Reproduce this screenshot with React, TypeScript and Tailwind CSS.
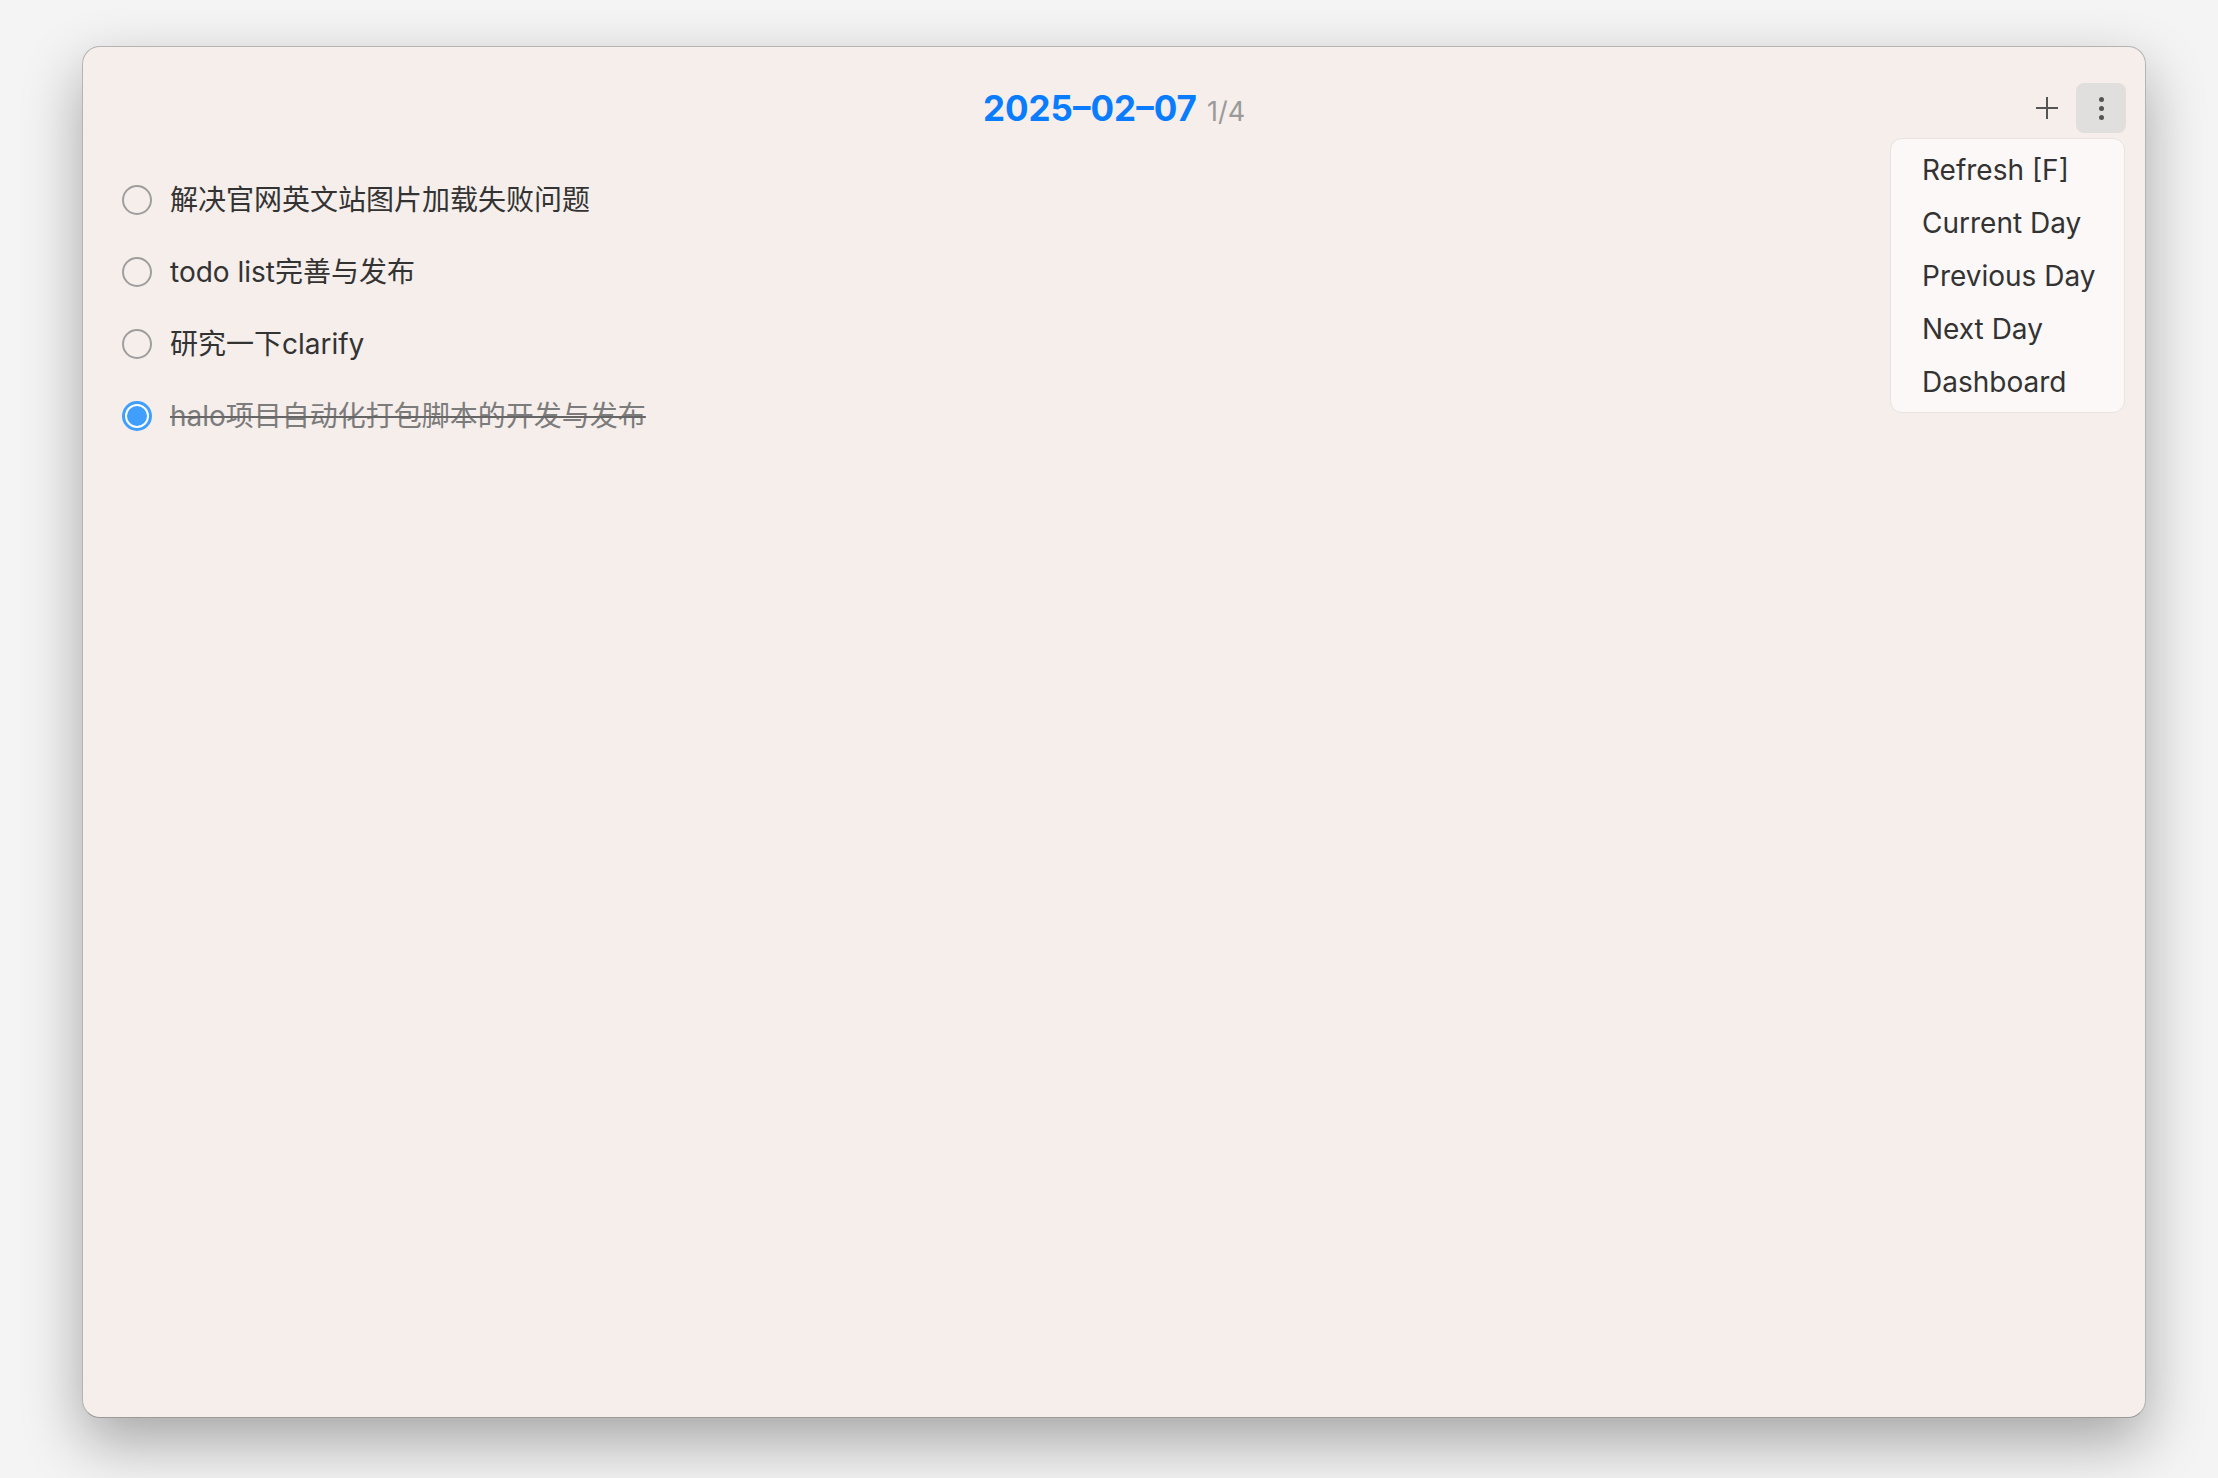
import React, { useState } from 'react';

interface Task {
  id: number;
  title: string;
  done: boolean;
}

const initialTasks: Task[] = [
  { id: 1, title: '解决官网英文站图片加载失败问题', done: false },
  { id: 2, title: 'todo list完善与发布', done: false },
  { id: 3, title: '研究一下clarify', done: false },
  { id: 4, title: 'halo项目自动化打包脚本的开发与发布', done: true },
];

const menuItems = ['Refresh [F]', 'Current Day', 'Previous Day', 'Next Day', 'Dashboard'];

const TaskCheck: React.FC<{ done: boolean }> = ({ done }) =>
  done ? (
    <span className="flex h-[30px] w-[30px] shrink-0 items-center justify-center rounded-full bg-[#409eff] p-[3px]">
      <span className="h-full w-full rounded-full border-2 border-white bg-[#409eff]" />
    </span>
  ) : (
    <span className="h-[30px] w-[30px] shrink-0 rounded-full border-2 border-[#9e9e9e]" />
  );

const App: React.FC = () => {
  const [tasks, setTasks] = useState<Task[]>(initialTasks);
  const [menuOpen, setMenuOpen] = useState(true);

  const toggle = (id: number) => {
    setTasks((prev) => prev.map((t) => (t.id === id ? { ...t, done: !t.done } : t)));
  };

  const doneCount = tasks.filter((t) => t.done).length;

  return (
    <div className="h-[1478px] w-[2218px] overflow-hidden bg-[#f4f4f4] pl-[82px] pt-[46px] font-['Inter','Noto_Sans_CJK_SC',sans-serif]">
      <div className="relative h-[1372px] w-[2064px] rounded-[18px] border border-[#b4b4b4] border-b-[#9a9a9a] bg-[#f5eeeb] shadow-[0_24px_60px_rgba(0,0,0,0.32)]">
        {/* Header */}
        <div className="mt-[36px] grid h-[50px] grid-cols-[1fr_auto_1fr] items-center">
          <div />
          <div className="flex items-baseline">
            <span className="text-[35px] font-bold leading-none text-[#0a7cff]">2025–02–07</span>
            <span className="ml-[10px] text-[27px] leading-none text-[#9a9a9a]">
              {doneCount}/{tasks.length}
            </span>
          </div>
          <div className="flex justify-end gap-[4px] pr-[19px]">
            <button className="flex h-[50px] w-[50px] items-center justify-center rounded-[8px] text-[#555]">
              <svg width="24" height="24" viewBox="0 0 24 24" fill="none" stroke="currentColor" strokeWidth="2">
                <path d="M12 1v22M1 12h22" />
              </svg>
            </button>
            <button
              onClick={() => setMenuOpen((o) => !o)}
              className="flex h-[50px] w-[50px] flex-col items-center justify-center gap-[4px] rounded-[8px] bg-[#e1dfde]"
            >
              <span className="h-[5px] w-[5px] rounded-full bg-[#555]" />
              <span className="h-[5px] w-[5px] rounded-full bg-[#555]" />
              <span className="h-[5px] w-[5px] rounded-full bg-[#555]" />
            </button>
          </div>
        </div>

        {/* Task list */}
        <ul className="mt-[31px] pl-[39px]">
          {tasks.map((task) => (
            <li
              key={task.id}
              onClick={() => toggle(task.id)}
              className="flex h-[72px] cursor-pointer items-center gap-[18px]"
            >
              <TaskCheck done={task.done} />
              <span
                className={
                  task.done
                    ? 'text-[28px] text-[#7c7c7c] line-through decoration-[#666]'
                    : 'text-[28px] text-[#333]'
                }
              >
                {task.title}
              </span>
            </li>
          ))}
        </ul>

        {/* Dropdown menu */}
        {menuOpen && (
          <div className="absolute right-[20px] top-[91px] w-[235px] rounded-[12px] border border-[#e6e3e1] bg-[#fbf8f7] pt-[4px] pb-[4px]">
            {menuItems.map((item) => (
              <div key={item} className="flex h-[53px] items-center pl-[31px] text-[28px] text-[#333]">
                {item}
              </div>
            ))}
          </div>
        )}
      </div>
    </div>
  );
};

export default App;
